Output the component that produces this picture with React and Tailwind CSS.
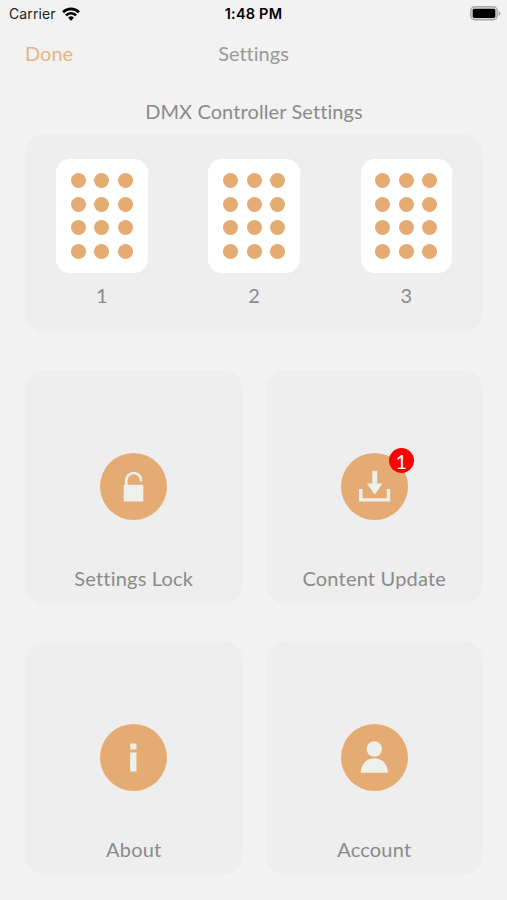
const keypads = [1, 2, 3];
const dots = Array.from({ length: 12 }, (_, i) => i);

function Wifi() {
  return (
    <svg className="ml-[6px] h-[14px] w-[18px]" viewBox="0 0 18 14" fill="none" stroke="#000" strokeWidth="2.6">
      <path d="M1 5.2a11.4 11.4 0 0 1 16 0" />
      <path d="M3.9 8.3a7.2 7.2 0 0 1 10.2 0" />
      <path d="M9 13.8 6.1 10.8a4.1 4.1 0 0 1 5.8 0Z" fill="#000" stroke="none" />
    </svg>
  );
}

function Battery() {
  return (
    <svg className="h-[15px] w-[31px]" viewBox="0 0 31 15">
      <rect x="0.8" y="0.8" width="26.4" height="13" rx="4" fill="#d8d8d8" stroke="#a9a9a9" strokeWidth="1.4" />
      <rect x="2.7" y="2.7" width="22.6" height="9.2" rx="1.6" fill="#000" />
      <path d="M28.6 5v4.8q1.8-.8 1.8-2.4T28.6 5Z" fill="#a9a9a9" />
    </svg>
  );
}

function LockIcon() {
  return (
    <>
      <path d="M26.3 33V27.4a7.4 7.4 0 0 1 14.8 0v1.2" fill="none" stroke="#efefee" strokeWidth="2.7" />
      <path d="M23.7 31.8h19.6v16.7H23.7z" fill="#efefee" />
    </>
  );
}

function DownloadIcon() {
  return (
    <path
      d="M31.3 17.8h4.9v12.6h5.4l-7.9 11-7.8-11h5.4zM18 36h3.6v9.3h24.1V36h3.5v12.5H18z"
      fill="#efefee"
    />
  );
}

function InfoIcon() {
  return <path d="M30.2 19.5h6.3v6h-6.3zM30.2 28.5h6.3v19h-6.3z" fill="#efefee" />;
}

function PersonIcon() {
  return (
    <g fill="#efefee">
      <circle cx="33.3" cy="25" r="7.7" />
      <path d="M19.7 48.8C20 40 25.6 34.2 33.3 34.2S46.7 40 47 48.8Z" />
    </g>
  );
}

const tiles = [
  { label: 'Settings Lock', Icon: LockIcon },
  { label: 'Content Update', Icon: DownloadIcon, badge: 1 },
  { label: 'About', Icon: InfoIcon },
  { label: 'Account', Icon: PersonIcon },
];

function Tile({ label, Icon, badge }) {
  return (
    <button className="flex h-[234px] flex-col items-center rounded-[20px] bg-[#eeeeee] pt-[83px]">
      <span className="relative block size-[67px] rounded-full bg-[#e4ab72]">
        <svg className="size-[67px]" viewBox="0 0 67 67">
          <Icon />
        </svg>
        {badge && (
          <span className="absolute -top-[5px] left-[48px] flex size-[25px] items-center justify-center rounded-full bg-[#ff0000] text-[20px] leading-none text-white">
            {badge}
          </span>
        )}
      </span>
      <span className="mt-[46px] text-[20px] leading-[24px] tracking-[0.2px] whitespace-nowrap">{label}</span>
    </button>
  );
}

export default function App() {
  return (
    <div className="h-[900px] w-[507px] overflow-hidden bg-[#f2f2f2] font-[Lato,sans-serif] text-[#8a8a8a]">
      <header className="grid h-[27px] grid-cols-[1fr_auto_1fr] items-center pr-[6px] pl-[9px] font-[Inter,sans-serif] text-[14px] text-black">
        <div className="flex items-center tracking-[0.1px] text-[#222222]">
          Carrier
          <Wifi />
        </div>
        <div className="-ml-[3px] pt-px text-[14.5px] font-semibold tracking-[0.2px]">1:48 PM</div>
        <div className="flex justify-end">
          <Battery />
        </div>
      </header>

      <nav className="grid h-[51px] grid-cols-[1fr_auto_1fr] items-center px-[25px] text-[20px] leading-[24px]">
        <button className="justify-self-start text-[#e8b681]">Done</button>
        <h1 className="tracking-[0.01px] text-[#999999]">Settings</h1>
      </nav>

      <main className="pr-[24px] pl-[25px]">
        <h2 className="mt-[21px] text-center text-[20px] leading-[24px] tracking-[0.1px]">DMX Controller Settings</h2>
        <section className="mt-[11px] flex h-[198px] justify-between rounded-[20px] bg-[#eeeeee] px-[31px] pt-[25px]">
          {keypads.map((n) => (
            <div key={n} className="flex w-[91.5px] flex-col items-center">
              <div className="grid h-[114px] w-[91.5px] grid-cols-[repeat(3,15px)] content-center justify-center gap-[8.7px] rounded-[14px] bg-white">
                {dots.map((d) => (
                  <span key={d} className="size-[15px] rounded-full bg-[#e4ab72]" />
                ))}
              </div>
              <span className="mt-[10px] text-[20px] leading-[24px]">{n}</span>
            </div>
          ))}
        </section>

        <section className="mt-[38px] grid grid-cols-2 gap-x-[23px] gap-y-[37px]">
          {tiles.map((tile) => (
            <Tile key={tile.label} {...tile} />
          ))}
        </section>
      </main>
    </div>
  );
}
